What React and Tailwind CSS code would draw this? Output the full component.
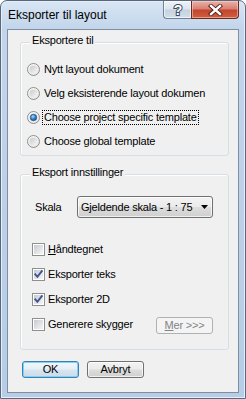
import React, { useId } from "react";

function Radio({ checked }) {
  const id = useId().replace(/:/g, "");
  return (
    <svg width="13" height="13" viewBox="0 0 13 13" className="shrink-0">
      <defs>
        <radialGradient id={`o${id}`} cx="0.35" cy="0.3" r="0.8">
          <stop offset="0" stopColor="#ffffff" />
          <stop offset="1" stopColor="#e2e2e2" />
        </radialGradient>
        <linearGradient id={`i${id}`} x1="0" y1="0" x2="1" y2="1">
          <stop offset="0" stopColor="#c9c9c9" />
          <stop offset="1" stopColor="#f7f7f7" />
        </linearGradient>
        <radialGradient id={`d${id}`} cx="0.4" cy="0.35" r="0.7">
          <stop offset="0" stopColor="#a8e0fb" />
          <stop offset="0.45" stopColor="#3d8fd8" />
          <stop offset="1" stopColor="#164a8c" />
        </radialGradient>
      </defs>
      <circle cx="6.5" cy="6.5" r="6" fill={`url(#o${id})`} stroke="#8e8f8f" />
      <circle cx="6.5" cy="6.5" r="4" fill={`url(#i${id})`} />
      {checked && (
        <circle cx="6.5" cy="6.5" r="3.2" fill={`url(#d${id})`} stroke="#1d3f6e" strokeWidth="0.6" />
      )}
    </svg>
  );
}

function Check({ checked }) {
  const id = useId().replace(/:/g, "");
  return (
    <svg width="13" height="13" viewBox="0 0 13 13" className="shrink-0">
      <defs>
        <linearGradient id={`c${id}`} x1="0" y1="0" x2="1" y2="1">
          <stop offset="0" stopColor="#c6cad0" />
          <stop offset="1" stopColor="#f6f6f6" />
        </linearGradient>
      </defs>
      <rect x="0.5" y="0.5" width="12" height="12" fill="#ffffff" stroke="#8e8f8f" />
      <rect x="2" y="2" width="9" height="9" fill={`url(#c${id})`} />
      {checked && (
        <polyline
          points="3.3,6.3 5.4,8.8 9.8,3.2"
          fill="none"
          stroke="#3f5393"
          strokeWidth="1.9"
          strokeLinecap="square"
        />
      )}
    </svg>
  );
}

function Group({ title, className, children }) {
  return (
    <div className={`relative ml-[12px] w-[209px] rounded-[3px] border border-[#d5dfe5] shadow-[inset_1px_1px_0_#ffffff] ${className}`}>
      <span className="absolute -top-[9px] left-[9px] bg-[#f0f0f0] px-[2px] leading-[13px] text-black">
        {title}
      </span>
      {children}
    </div>
  );
}

function RadioRow({ label, checked, focused }) {
  return (
    <div className="flex h-[24px] items-center pl-[6px]">
      <Radio checked={checked} />
      {focused ? (
        <span className="ml-[3px] leading-[13px] outline outline-1 outline-dotted outline-black px-[1px]">
          {label}
        </span>
      ) : (
        <span className="ml-[4px] leading-[13px]">{label}</span>
      )}
    </div>
  );
}

function CheckRow({ label, checked, children }) {
  return (
    <div className="flex h-[25px] items-center pl-[11px]">
      <Check checked={checked} />
      <span className="ml-[3px] leading-[13px]">{label}</span>
      {children}
    </div>
  );
}

export default function App() {
  return (
    <div className="font-['Liberation_Sans',Arial,sans-serif] text-[11px] tracking-[-0.2px] text-black">
      <div className="flex h-[399px] w-[246px] flex-col rounded-t-[7px] border border-[#56687e] bg-[linear-gradient(to_bottom,#d9e6f4_0px,#c2d5eb_28px,#bcd0e8_200px,#b7cce6_399px)] shadow-[inset_0_0_0_1px_#e6eef8]">
        {/* Title bar */}
        <div className="flex h-[28px] shrink-0 items-start">
          <div className="pl-[7px] pt-[7px] text-[12px] leading-[15px] tracking-normal text-black">
            Eksporter til layout
          </div>
          <div className="ml-auto mr-[6px] flex">
            <div className="flex h-[18px] w-[28px] items-center justify-center rounded-bl-[4px] border border-t-0 border-r-0 border-[#6f8296] bg-[linear-gradient(to_bottom,#eef3f8_0%,#dde6ef_45%,#c5d2e0_55%,#d3dfea_100%)] shadow-[inset_0_0_0_1px_rgba(255,255,255,0.6)]">
              <svg width="14" height="16" viewBox="0 0 14 16">
                <text
                  x="7"
                  y="13"
                  textAnchor="middle"
                  fontSize="14"
                  fontWeight="bold"
                  fontFamily="Liberation Sans, Arial, sans-serif"
                  fill="#ffffff"
                  stroke="#3b4b5e"
                  strokeWidth="2"
                  paintOrder="stroke"
                >
                  ?
                </text>
              </svg>
            </div>
            <div className="flex h-[18px] w-[48px] items-center justify-center rounded-br-[4px] border border-t-0 border-[#6b2a20] bg-[linear-gradient(to_bottom,#eab3a8_0%,#d98072_45%,#c4452f_55%,#d0603f_100%)] shadow-[inset_0_0_0_1px_rgba(255,220,210,0.5)]">
              <svg width="15" height="12" viewBox="0 0 15 12">
                <path d="M3 2 L12 10 M12 2 L3 10" stroke="#4a1c16" strokeWidth="4.2" strokeLinecap="square" />
                <path d="M3 2 L12 10 M12 2 L3 10" stroke="#ffffff" strokeWidth="2.4" strokeLinecap="square" />
              </svg>
            </div>
          </div>
        </div>

        {/* Client area */}
        <div className="mx-[6px] mb-[5px] flex flex-1 flex-col border border-[#7f8ea1] bg-[#f0f0f0]">
          <Group title="Eksportere til" className="mt-[12px] h-[114px] pt-[14px]">
            <RadioRow label="Nytt layout dokument" />
            <RadioRow label="Velg eksisterende layout dokumen" />
            <RadioRow label="Choose project specific template" checked focused />
            <RadioRow label="Choose global template" />
          </Group>

          <Group title="Eksport innstillinger" className="mt-[18px] h-[176px] pt-[21px]">
            <div className="flex h-[22px] items-center">
              <span className="ml-[14px] w-[42px] leading-[13px]">Skala</span>
              <div className="flex h-[22px] w-[136px] items-center rounded-[3px] border border-[#707070] bg-[linear-gradient(to_bottom,#f3f3f3_0%,#ebebeb_48%,#dddddd_52%,#cfcfcf_100%)] shadow-[inset_0_0_0_1px_rgba(255,255,255,0.7)]">
                <span className="pl-[3px] leading-[13px]">Gjeldende skala - 1 : 75</span>
                <svg width="8" height="5" viewBox="0 0 8 5" className="ml-auto mr-[3px]">
                  <path d="M0 0 H7 L3.5 4 Z" fill="#000000" />
                </svg>
              </div>
            </div>
            <div className="mt-[19px]">
              <CheckRow label={<><span className="underline">H</span>åndtegnet</>} />
              <CheckRow label="Eksporter teks" checked />
              <CheckRow label="Eksporter 2D" checked />
              <CheckRow label="Generere skygger">
                <div className="ml-auto mr-[15px] mt-[2px] flex h-[17px] w-[57px] items-center justify-center rounded-[3px] border border-[#adb2b5] bg-[#f4f4f4] leading-[13px] text-[#838383]">
                  <span>
                    <span className="underline">M</span>er &gt;&gt;&gt;
                  </span>
                </div>
              </CheckRow>
            </div>
          </Group>

          <div className="ml-[14px] mt-[11px] flex gap-[8px]">
            <div className="flex h-[17px] w-[57px] items-center justify-center rounded-[3px] border border-[#3c7fb1] bg-[linear-gradient(to_bottom,#f2f8fc_0%,#e6eff6_48%,#d7e5ef_52%,#cadbe8_100%)] shadow-[inset_0_0_0_1px_#7fd1f6] leading-[13px]">
              OK
            </div>
            <div className="flex h-[17px] w-[57px] items-center justify-center rounded-[3px] border border-[#707070] bg-[linear-gradient(to_bottom,#f2f2f2_0%,#ebebeb_48%,#dddddd_52%,#cfcfcf_100%)] shadow-[inset_0_0_0_1px_rgba(255,255,255,0.7)] leading-[13px]">
              Avbryt
            </div>
          </div>
        </div>
      </div>
    </div>
  );
}
